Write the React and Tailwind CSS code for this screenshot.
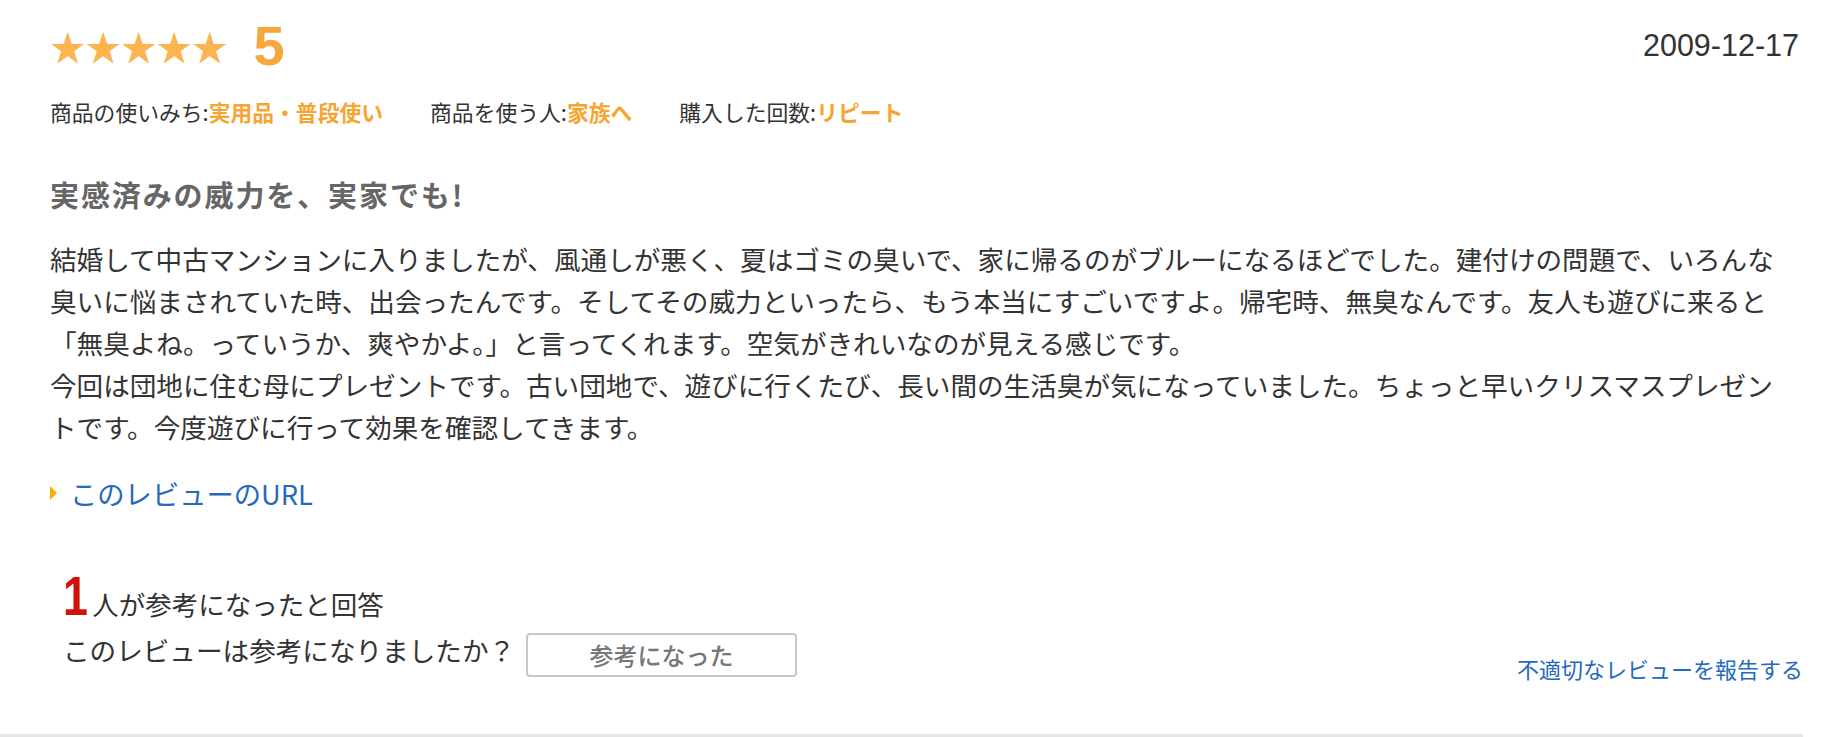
import React from "react";

const font = { fontFamily: '"Noto Sans CJK JP", "Noto Sans", sans-serif' };

const meta = [
  { label: "商品の使いみち:", value: "実用品・普段使い" },
  { label: "商品を使う人:", value: "家族へ" },
  { label: "購入した回数:", value: "リピート" },
];

const bodyLines = [
  "結婚して中古マンションに入りましたが、風通しが悪く、夏はゴミの臭いで、家に帰るのがブルーになるほどでした。建付けの問題で、いろんな臭いに悩まされていた時、出会ったんです。そしてその威力といったら、もう本当にすごいですよ。帰宅時、無臭なんです。友人も遊びに来ると「無臭よね。っていうか、爽やかよ。」と言ってくれます。空気がきれいなのが見える感じです。",
  "今回は団地に住む母にプレゼントです。古い団地で、遊びに行くたび、長い間の生活臭が気になっていました。ちょっと早いクリスマスプレゼントです。今度遊びに行って効果を確認してきます。",
];

export default function App() {
  return (
    <div className="bg-white min-h-[737px]" style={font}>
      <div className="w-[1803px] pl-[50px] pt-[18px] pb-[51px] border-b-[3px] border-[#e6e6e6]">
        {/* rating + date */}
        <div className="flex justify-between items-start h-[56px]">
          <div className="flex items-center h-[56px]">
            <span className="text-[35.5px] leading-none text-[#fbb450]">★★★★★</span>
            <span className="ml-[26px] text-[56px] leading-[56px] font-bold text-[#f6a83f] font-['Liberation_Sans',sans-serif]">5</span>
          </div>
          <div className="h-[56px] flex items-center mr-[4px] text-[30.5px] text-[#333] font-['Liberation_Sans',sans-serif]">
            2009-12-17
          </div>
        </div>

        {/* meta */}
        <div className="mt-[23px] flex gap-[47px] text-[21.8px] leading-[30px] text-[#333]">
          {meta.map((m) => (
            <span key={m.label}>
              {m.label}
              <span className="font-bold text-[#f7a531]">{m.value}</span>
            </span>
          ))}
        </div>

        {/* title */}
        <h3 className="mt-[47px] text-[29px] leading-[40px] font-bold text-[#666] tracking-[1.9px]">
          実感済みの威力を、実家でも!
        </h3>

        {/* body */}
        <div className="mt-[24px] w-[1742px] text-[26.6px] leading-[42px] text-[#333]">
          {bodyLines.map((l, i) => (
            <p key={i}>{l}</p>
          ))}
        </div>

        {/* url */}
        <div className="mt-[27px] flex items-center h-[36px]">
          <span className="w-0 h-0 border-l-[7px] border-l-[#f5b000] border-y-[7px] border-y-transparent" />
          <a href="#" className="ml-[13px] text-[27.3px] leading-[36px] text-[#2569bd]">
            このレビューのURL
          </a>
        </div>

        {/* helpful */}
        <div className="mt-[57px] pl-[13px] flex items-baseline h-[56px]">
          <span className="inline-block origin-left scale-x-[0.8] text-[56px] leading-[56px] font-bold text-[#d0130a] font-['Liberation_Sans',sans-serif]">1</span>
          <span className="-ml-[2px] text-[26.5px] text-[#333]">人が参考になったと回答</span>
        </div>

        <div className="flex justify-between items-start">
          <div className="pl-[13px] flex items-start">
            <span className="mt-[8px] text-[26.6px] leading-[36px] text-[#333]">このレビューは参考になりましたか？</span>
            <button className="ml-[11px] mt-[9px] w-[271px] h-[44px] rounded-[4px] border-2 border-[#c8c8c8] bg-white text-[24px] font-medium text-[#777]">
              参考になった
            </button>
          </div>
          <a href="#" className="mt-[29px] text-[22px] leading-[30px] text-[#2569bd]">
            不適切なレビューを報告する
          </a>
        </div>
      </div>
    </div>
  );
}
